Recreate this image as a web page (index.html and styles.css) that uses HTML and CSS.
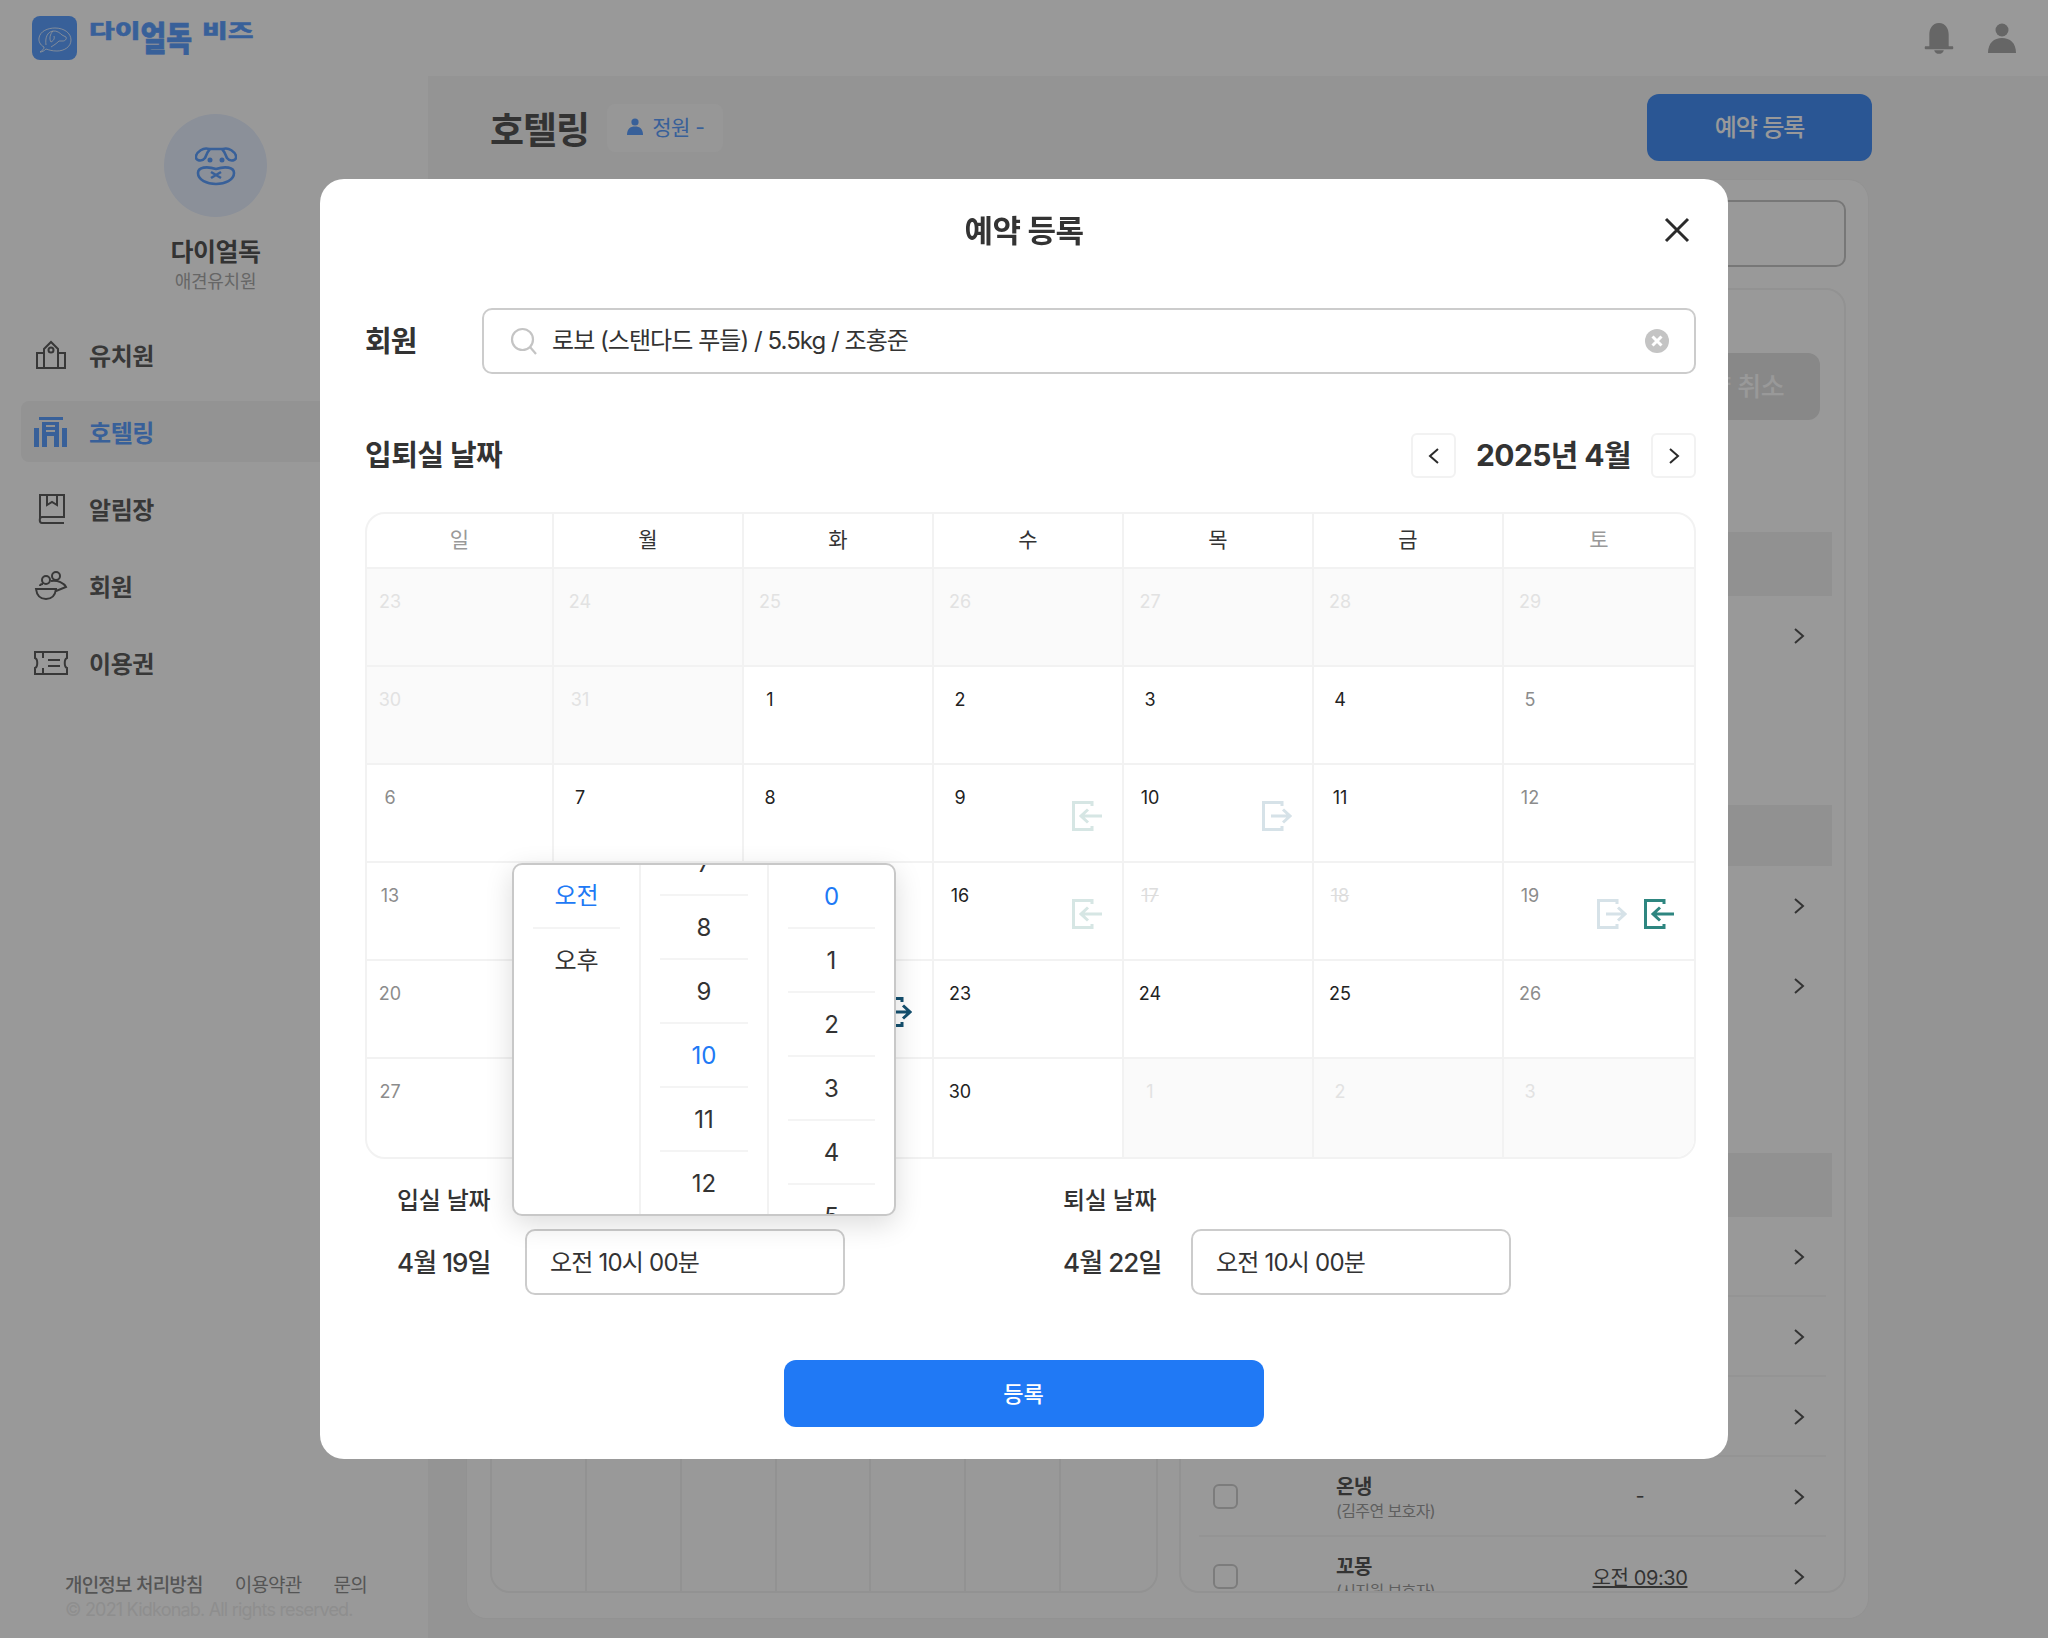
FILE: index.html
```html
<!DOCTYPE html>
<html lang="ko">
<head>
  <meta charset="UTF-8" />
  <title>다이얼독 비즈 - 호텔링</title>
  <meta name="viewport" content="width=device-width, initial-scale=1.0" />
  <link rel="stylesheet" href="styles.css">
</head>
<body>

<svg class="defs" aria-hidden="true">
  <symbol id="ic-in" viewBox="0 0 30 30">
    <path d="M20 5V1.5H1.5V28.5H20V25" fill="none" stroke="currentColor" stroke-width="3"/>
    <path d="M30 15H10M16 8.5L9 15L16 21.5" fill="none" stroke="currentColor" stroke-width="3"/>
  </symbol>
  <symbol id="ic-out" viewBox="0 0 30 30">
    <path d="M20 5V1.5H1.5V28.5H20V25" fill="none" stroke="currentColor" stroke-width="3"/>
    <path d="M9 15H28M21 8.5L28 15L21 21.5" fill="none" stroke="currentColor" stroke-width="3"/>
  </symbol>
  <symbol id="ic-chev" viewBox="0 0 12 18">
    <path d="M2 2L10 9L2 16" fill="none" stroke="currentColor" stroke-width="2"/>
  </symbol>
</svg>

<header class="topbar">
  <div class="brand">
    <svg class="brand-mark" viewBox="0 0 45 44">
      <rect width="45" height="44" rx="8" fill="#3c8cff"/>
      <g fill="none" stroke="#fff" stroke-width="1" stroke-opacity="0.75">
        <path d="M8 36C11 34 12 33 12 31C8 29 6.5 25 7 22C8 15 16 12 23 12C32 12 39 17 39 24C39 31 32 35 25 35C20 35 17 34 14 33C12 35 10 36 8 36Z"/>
        <path d="M14 29C13 22 15 16 21 15C25 14.5 28 17 30 19L34 21C35 23 33 25 31 25L27 25C24 28 22 29 19 31"/>
        <path d="M21 15C18 18 17 23 19 26C21 25 23 23 22 20"/>
      </g>
    </svg>
    <div class="brand-name">
      <span class="logo-short">다이</span><span class="logo-tall">얼독</span><span class="logo-short logo-gap">비즈</span>
    </div>
  </div>
  <div class="topbar-icons">
    <svg class="bell" viewBox="0 0 30 32"><path d="M15 0C22 0 25 6 25 12V24H29C30 24 30 27 29 27H1C0 27 0 24 1 24H5V12C5 6 8 0 15 0ZM10 28H20C19 33 11 33 10 28Z"/></svg>
    <svg class="person" viewBox="0 0 28 30"><circle cx="14" cy="7" r="6.5"/><path d="M0 30C0 20 6 15 14 15C22 15 28 20 28 30Z"/></svg>
  </div>
</header>

<div class="layout">
  <aside class="sidebar">
    <div class="profile">
      <div class="avatar">
        <svg viewBox="0 0 42 40" fill="none" stroke="#3c8cff" stroke-width="2.6">
          <path d="M14 3C8 1 2 6 1 10C0 15 7 16 10 12C11 10 12 6 15 3H27C30 6 31 10 32 12C35 16 42 15 41 10C40 6 34 1 28 3"/>
          <circle cx="15" cy="14" r="1.2"/><circle cx="27" cy="14" r="1.2"/>
          <path d="M3 27C3 21 12 20 21 23C30 20 39 21 39 27C39 34 30 38 21 38C12 38 3 34 3 27Z"/>
          <path d="M16 26L26 32M26 26L16 32"/>
        </svg>
      </div>
      <div class="profile-name">다이얼독</div>
      <div class="profile-sub">애견유치원</div>
    </div>

    <nav class="nav">
      <a class="nav-item">
        <svg class="nav-icon" viewBox="0 0 34 30" fill="none" stroke="currentColor" stroke-width="2">
          <path d="M10 28V9L17 2L24 9V28M10 13H3V28H31V13H24"/><circle cx="17" cy="10" r="2.5"/>
        </svg>
        유치원
      </a>
      <a class="nav-item active">
        <svg class="nav-icon" viewBox="0 0 34 30" fill="currentColor">
          <path d="M5 0H29V3H5ZM0 11H5V30H0ZM28 11H33V30H28ZM8 5H25V30H20V19H13V30H8ZM12 8V10H21V8ZM12 13V15H21V13Z" fill-rule="evenodd"/>
        </svg>
        호텔링
      </a>
      <a class="nav-item">
        <svg class="nav-icon" viewBox="0 0 34 30" fill="none" stroke="currentColor" stroke-width="2">
          <path d="M6 25V1H30V23H8C5 23 5 29 8 29H30"/><path d="M13 1V11L18 8L23 11V1"/>
        </svg>
        알림장
      </a>
      <a class="nav-item">
        <svg class="nav-icon" viewBox="0 0 34 30" fill="none" stroke="currentColor" stroke-width="2">
          <circle cx="12" cy="9" r="4"/><circle cx="22" cy="5" r="4"/>
          <path d="M2 18H22C21 26 17 28 12 28C7 28 3 26 2 18ZM17 10C24 9 30 12 32 16L22 20M6 15C6 13 8 13 9 13"/>
        </svg>
        회원
      </a>
      <a class="nav-item">
        <svg class="nav-icon" viewBox="0 0 34 30" fill="none" stroke="currentColor" stroke-width="2">
          <path d="M1 4H33V10C30 11 30 19 33 20V26H1V20C4 19 4 11 1 10ZM9 4V10M9 20V26M14 12H26M14 18H26"/>
        </svg>
        이용권
      </a>
    </nav>

    <footer class="side-foot">
      <div class="foot-links">
        <a class="foot-strong">개인정보 처리방침</a>
        <a>이용약관</a>
        <a>문의</a>
      </div>
      <div class="foot-copy">© 2021 Kidkonab. All rights reserved.</div>
    </footer>
  </aside>

  <main class="main">
    <div class="page-head">
      <h1 class="page-title">호텔링</h1>
      <div class="chip">
        <svg viewBox="0 0 18 17"><circle cx="9" cy="4" r="3.6"/><path d="M1 17C1 11 4 8.5 9 8.5C14 8.5 17 11 17 17Z"/></svg>
        정원 -
      </div>
      <button class="primary-btn">예약 등록</button>
    </div>

    <section class="board">
      <div class="board-search"></div>
      <div class="board-cols">
        <div class="week">
          <div></div><div></div><div></div><div></div><div></div><div></div><div></div>
        </div>
        <div class="list-panel">
          <button class="cancel-btn">예약 취소</button>

          <div class="list-bar first"></div>
          <div class="list-row plain"><svg class="row-chev"><use href="#ic-chev"/></svg></div>

          <div class="list-bar second"></div>
          <div class="list-row plain"><svg class="row-chev"><use href="#ic-chev"/></svg></div>
          <div class="list-row plain"><svg class="row-chev"><use href="#ic-chev"/></svg></div>

          <div class="list-bar third"></div>
          <div class="list-row"><svg class="row-chev"><use href="#ic-chev"/></svg></div>
          <div class="list-row"><svg class="row-chev"><use href="#ic-chev"/></svg></div>
          <div class="list-row"><svg class="row-chev"><use href="#ic-chev"/></svg></div>
          <div class="list-row">
            <span class="check"></span>
            <div class="pet"><strong>온냉</strong><span>(김주연 보호자)</span></div>
            <div class="time">-</div>
            <svg class="row-chev"><use href="#ic-chev"/></svg>
          </div>
          <div class="list-row">
            <span class="check"></span>
            <div class="pet"><strong>꼬몽</strong><span>(시지원 보호자)</span></div>
            <div class="time"><u>오전 09:30</u></div>
            <svg class="row-chev"><use href="#ic-chev"/></svg>
          </div>
        </div>
      </div>
    </section>
  </main>
</div>

<div class="overlay">
  <div class="modal">
    <div class="modal-head">
      <h2>예약 등록</h2>
      <svg class="modal-close" viewBox="0 0 26 26"><path d="M2 2L24 24M24 2L2 24" fill="none" stroke="#2b2b2b" stroke-width="3"/></svg>
    </div>

    <div class="member-row">
      <label>회원</label>
      <div class="search-box">
        <svg class="search-icon" viewBox="0 0 28 28" fill="none" stroke="#c4c4c4" stroke-width="2.2">
          <circle cx="12.5" cy="12.5" r="10.5"/><path d="M20 20L26 27"/>
        </svg>
        <span class="search-text">로보 (스탠다드 푸들) / 5.5kg / 조홍준</span>
        <svg class="search-clear" viewBox="0 0 24 24"><circle cx="12" cy="12" r="12" fill="#c4c4c4"/><path d="M7.5 7.5L16.5 16.5M16.5 7.5L7.5 16.5" stroke="#fff" stroke-width="3"/></svg>
      </div>
    </div>

    <div class="date-head">
      <h3>입퇴실 날짜</h3>
      <div class="month-nav">
        <button class="month-btn"><svg viewBox="0 0 12 18"><path d="M10 2L2 9L10 16" fill="none" stroke="#2b2b2b" stroke-width="2"/></svg></button>
        <span class="month-label">2025년 4월</span>
        <button class="month-btn"><svg viewBox="0 0 12 18"><path d="M2 2L10 9L2 16" fill="none" stroke="#2b2b2b" stroke-width="2"/></svg></button>
      </div>
    </div>

    <div class="calendar-wrap">
      <div class="calendar">
        <div class="dow muted">일</div><div class="dow">월</div><div class="dow">화</div><div class="dow">수</div><div class="dow">목</div><div class="dow">금</div><div class="dow muted">토</div>

        <div class="cell off"><span class="num">23</span></div>
        <div class="cell off"><span class="num">24</span></div>
        <div class="cell off"><span class="num">25</span></div>
        <div class="cell off"><span class="num">26</span></div>
        <div class="cell off"><span class="num">27</span></div>
        <div class="cell off"><span class="num">28</span></div>
        <div class="cell off"><span class="num">29</span></div>

        <div class="cell off"><span class="num">30</span></div>
        <div class="cell off"><span class="num">31</span></div>
        <div class="cell"><span class="num">1</span></div>
        <div class="cell"><span class="num">2</span></div>
        <div class="cell"><span class="num">3</span></div>
        <div class="cell"><span class="num">4</span></div>
        <div class="cell weekend"><span class="num">5</span></div>

        <div class="cell weekend"><span class="num">6</span></div>
        <div class="cell"><span class="num">7</span></div>
        <div class="cell"><span class="num">8</span></div>
        <div class="cell"><span class="num">9</span><div class="marks"><svg class="mark in-faint"><use href="#ic-in"/></svg></div></div>
        <div class="cell"><span class="num">10</span><div class="marks"><svg class="mark out-faint"><use href="#ic-out"/></svg></div></div>
        <div class="cell"><span class="num">11</span></div>
        <div class="cell weekend"><span class="num">12</span></div>

        <div class="cell weekend"><span class="num">13</span></div>
        <div class="cell"><span class="num">14</span></div>
        <div class="cell"><span class="num">15</span></div>
        <div class="cell"><span class="num">16</span><div class="marks"><svg class="mark in-faint"><use href="#ic-in"/></svg></div></div>
        <div class="cell closed"><span class="num">17</span></div>
        <div class="cell closed"><span class="num">18</span></div>
        <div class="cell weekend"><span class="num">19</span><div class="marks"><svg class="mark out-faint"><use href="#ic-out"/></svg><svg class="mark in-on"><use href="#ic-in"/></svg></div></div>

        <div class="cell weekend"><span class="num">20</span></div>
        <div class="cell"><span class="num">21</span></div>
        <div class="cell"><span class="num">22</span><div class="marks"><svg class="mark out-on"><use href="#ic-out"/></svg></div></div>
        <div class="cell"><span class="num">23</span></div>
        <div class="cell"><span class="num">24</span></div>
        <div class="cell"><span class="num">25</span></div>
        <div class="cell weekend"><span class="num">26</span></div>

        <div class="cell weekend"><span class="num">27</span></div>
        <div class="cell"><span class="num">28</span></div>
        <div class="cell"><span class="num">29</span></div>
        <div class="cell"><span class="num">30</span></div>
        <div class="cell off"><span class="num">1</span></div>
        <div class="cell off"><span class="num">2</span></div>
        <div class="cell off"><span class="num">3</span></div>
      </div>

      <div class="time-popup">
        <div class="time-col ampm">
          <div class="time-opt on">오전</div>
          <div class="time-opt">오후</div>
        </div>
        <div class="time-col hours">
          <div class="time-opt">7</div>
          <div class="time-opt">8</div>
          <div class="time-opt">9</div>
          <div class="time-opt on">10</div>
          <div class="time-opt">11</div>
          <div class="time-opt">12</div>
        </div>
        <div class="time-col">
          <div class="time-opt on">0</div>
          <div class="time-opt">1</div>
          <div class="time-opt">2</div>
          <div class="time-opt">3</div>
          <div class="time-opt">4</div>
          <div class="time-opt">5</div>
        </div>
      </div>
    </div>

    <div class="stay">
      <div class="stay-group">
        <div class="stay-label">입실 날짜</div>
        <div class="stay-line">
          <span class="stay-date">4월 19일</span>
          <div class="stay-input">오전 10시 00분</div>
        </div>
      </div>
      <div class="stay-group">
        <div class="stay-label">퇴실 날짜</div>
        <div class="stay-line">
          <span class="stay-date">4월 22일</span>
          <div class="stay-input">오전 10시 00분</div>
        </div>
      </div>
    </div>

    <button class="submit-btn">등록</button>
  </div>
</div>

</body>
</html>
```

FILE: styles.css
```css
* {
  box-sizing: border-box;
}

body {
  font-family: Inter, "Noto Sans CJK KR", sans-serif;
  background-color: #f4f4f4;
  color: #333;
  margin: 0;
  width: 2048px;
  height: 1638px;
  overflow: hidden;
}

button {
  font-family: inherit;
  border: none;
}

.defs {
  position: absolute;
  width: 0;
  height: 0;
}

/* top bar */
.topbar {
  height: 76px;
  background-color: #fff;
  padding: 16px 32px 0;
  display: flex;
  justify-content: space-between;
}

.brand {
  display: flex;
  gap: 12px;
  height: 44px;
}

.brand-mark {
  width: 45px;
  height: 44px;
}

.brand-name {
  display: flex;
  align-items: flex-start;
  height: 44px;
  color: #3c8cff;
  font-family: "Noto Sans CJK KR", sans-serif;
  font-size: 28px;
  font-weight: 900;
  line-height: 28px;
  -webkit-text-stroke: 0.6px #3c8cff;
}

.logo-short {
  transform: scaleY(0.7);
  transform-origin: 0 0;
  margin-top: 4px;
}

.logo-tall {
  transform: scaleY(1.2);
  transform-origin: 0 0;
  margin-top: 4px;
}

.logo-gap {
  margin-left: 10px;
}

.topbar-icons {
  display: flex;
  gap: 34px;
  padding: 7px 0 0 0;
}

.bell {
  width: 30px;
  height: 31px;
  fill: #989898;
}

.person {
  width: 28px;
  height: 30px;
  fill: #989898;
}

/* sidebar */
.layout {
  display: flex;
  height: 1562px;
}

.sidebar {
  width: 428px;
  background-color: #fff;
  display: flex;
  flex-direction: column;
}

.profile {
  text-align: center;
  padding: 38px 0 0 3px;
}

.avatar {
  width: 103px;
  height: 103px;
  border-radius: 50%;
  background-color: #e2ecff;
  margin: 0 auto 19px;
  display: flex;
  align-items: center;
  justify-content: center;
}

.avatar svg {
  width: 42px;
  height: 40px;
}

.profile-name {
  font-size: 25px;
  font-weight: 700;
  line-height: 33px;
  letter-spacing: -0.5px;
}

.profile-sub {
  font-size: 18px;
  line-height: 25px;
  color: #999;
  letter-spacing: -0.3px;
}

.nav {
  margin: 30px 21px 0;
  display: flex;
  flex-direction: column;
  gap: 16px;
}

.nav-item {
  height: 61px;
  display: flex;
  align-items: center;
  gap: 21px;
  padding-left: 13px;
  border-radius: 8px;
  font-size: 24px;
  font-weight: 700;
  letter-spacing: -0.4px;
  color: #3c3c3c;
}

.nav-item.active {
  background-color: #f2f2f2;
  color: #3c8cff;
}

.nav-icon {
  width: 34px;
  height: 30px;
}

.side-foot {
  margin-top: auto;
  padding: 0 0 18px 65px;
  font-size: 19px;
  color: #777;
  letter-spacing: -0.8px;
}

.foot-links {
  display: flex;
  gap: 32px;
  line-height: 28px;
}

.foot-strong {
  font-weight: 500;
}

.foot-copy {
  line-height: 20px;
  color: #e8e8e8;
  font-size: 18px;
}

/* page behind the modal */
.main {
  flex: 1;
  padding: 18px 176px 0 39px;
}

.page-head {
  display: flex;
  align-items: center;
  height: 67px;
  margin-left: 23px;
}

.page-title {
  font-size: 37px;
  font-weight: 700;
  letter-spacing: -1px;
  margin: 0 18px 0 0;
}

.chip {
  height: 48px;
  width: 116px;
  background-color: #fafafa;
  border-radius: 8px;
  display: flex;
  align-items: center;
  gap: 8px;
  padding: 0 0 3px 19px;
  font-size: 21px;
  letter-spacing: -0.5px;
  color: #3c8cff;
}

.chip svg {
  width: 18px;
  height: 17px;
  fill: #3c8cff;
}

.primary-btn {
  margin-left: auto;
  width: 225px;
  height: 67px;
  padding-bottom: 5px;
  border-radius: 12px;
  background-color: #2079f5;
  color: #fff;
  font-size: 24px;
  font-weight: 500;
  letter-spacing: -1px;
}

.board {
  width: 1401px;
  height: 1438px;
  margin-top: 19px;
  padding: 20px 22px 0 23px;
  background-color: #fff;
  border-radius: 20px;
  box-shadow: 0 0 0 1px #f0f0f0;
}

.board-search {
  height: 67px;
  border: 2px solid #bbb;
  border-radius: 10px;
}

.board-cols {
  display: flex;
  gap: 21px;
  margin-top: 21px;
}

.week {
  width: 668px;
  height: 1305px;
  border: 2px solid #f0f0f0;
  border-radius: 20px;
  display: grid;
  grid-template-columns: repeat(7, 1fr);
  overflow: hidden;
}

.week div {
  border-right: 2px solid #f0f0f0;
}

.week div:last-child {
  border-right: none;
}

.list-panel {
  width: 667px;
  height: 1305px;
  border: 2px solid #f0f0f0;
  border-radius: 20px;
  padding-top: 63px;
  overflow: hidden;
}

.cancel-btn {
  display: block;
  margin-left: auto;
  margin-right: 24px;
  width: 176px;
  height: 67px;
  padding: 0 0 5px 4px;
  border-radius: 12px;
  background-color: #dcdcdc;
  color: #fff;
  font-size: 26px;
  font-weight: 500;
  letter-spacing: -0.5px;
}

.list-bar {
  height: 64px;
  margin: 0 12px;
  background-color: #eee;
}

.list-bar.first {
  margin-top: 112px;
}

.list-bar.second {
  height: 61px;
  margin-top: 129px;
}

.list-bar.third {
  margin-top: 127px;
}

.list-row {
  height: 80px;
  margin: 0 18px;
  display: flex;
  align-items: center;
  padding-left: 14px;
  border-bottom: 2px solid #f4f4f4;
  position: relative;
}

.list-row.plain {
  border-bottom: none;
}

.row-chev {
  width: 12px;
  height: 18px;
  color: #333;
  position: absolute;
  right: 21px;
  top: 31px;
}

.check {
  width: 25px;
  height: 25px;
  border: 2px solid #c4c4c4;
  border-radius: 6px;
}

.pet {
  margin: 4px 0 0 98px;
  width: 204px;
  display: flex;
  flex-direction: column;
}

.pet strong {
  font-size: 20px;
  line-height: 25px;
  letter-spacing: -0.5px;
}

.pet span {
  font-size: 16px;
  line-height: 22px;
  color: #888;
  letter-spacing: -0.6px;
}

.time {
  width: 200px;
  text-align: center;
  font-size: 20px;
  letter-spacing: -0.4px;
}

/* modal */
.overlay {
  position: fixed;
  inset: 0;
  background-color: rgba(51, 51, 51, 0.5);
  display: flex;
  align-items: center;
  justify-content: center;
}

.modal {
  width: 1408px;
  height: 1280px;
  background-color: #fff;
  border-radius: 24px;
  padding: 0 32px 0 45px;
}

.modal-head {
  height: 102px;
  display: flex;
  align-items: center;
  justify-content: center;
  position: relative;
}

.modal-head h2 {
  margin: 0 0 4px -13px;
  font-size: 31px;
  font-weight: 700;
  letter-spacing: -0.5px;
  color: #333;
}

.modal-close {
  position: absolute;
  right: 6px;
  top: 38px;
  width: 26px;
  height: 26px;
}

.member-row {
  display: flex;
  align-items: center;
  margin-top: 27px;
}

.member-row label {
  width: 117px;
  font-size: 29px;
  font-weight: 700;
  letter-spacing: -1px;
  margin-bottom: 5px;
}

.search-box {
  flex: 1;
  height: 66px;
  border: 2px solid #ccc;
  border-radius: 10px;
  display: flex;
  align-items: center;
  padding: 0 25px 0 26px;
}

.search-icon {
  width: 28px;
  height: 28px;
}

.search-text {
  margin: 0 0 5px 14px;
  font-size: 24px;
  letter-spacing: -0.95px;
  color: #333;
}

.search-clear {
  margin-left: auto;
  width: 24px;
  height: 24px;
}

.date-head {
  display: flex;
  align-items: center;
  justify-content: space-between;
  margin-top: 59px;
  height: 45px;
}

.date-head h3 {
  margin: 0 0 5px;
  font-size: 29px;
  font-weight: 700;
  letter-spacing: -0.5px;
}

.month-nav {
  display: flex;
  align-items: center;
}

.month-btn {
  width: 45px;
  height: 45px;
  background-color: #fff;
  border: 2px solid #f2f2f2;
  border-radius: 6px;
  padding: 0;
  display: flex;
  align-items: center;
  justify-content: center;
}

.month-btn svg {
  width: 12px;
  height: 18px;
}

.month-label {
  width: 195px;
  margin-bottom: 5px;
  text-align: center;
  font-size: 30px;
  font-weight: 700;
  letter-spacing: -0.6px;
}

.calendar-wrap {
  position: relative;
  margin-top: 34px;
}

.calendar {
  display: grid;
  grid-template-columns: 187px repeat(6, 1fr);
  grid-template-rows: 55px repeat(6, 1fr);
  height: 647px;
  border: 2px solid #f2f2f2;
  border-radius: 20px;
  overflow: hidden;
}

.dow {
  display: flex;
  align-items: center;
  justify-content: center;
  padding-bottom: 5px;
  font-size: 21px;
  color: #333;
  border-right: 2px solid #f2f2f2;
  border-bottom: 2px solid #f2f2f2;
}

.dow.muted {
  color: #999;
}

.cell {
  position: relative;
  border-right: 2px solid #f2f2f2;
  border-bottom: 2px solid #f2f2f2;
  color: #222;
}

.dow:nth-child(7n),
.cell:nth-child(7n) {
  border-right: none;
}

.cell:nth-last-child(-n+7) {
  border-bottom: none;
}

.num {
  position: absolute;
  left: 6px;
  top: 20px;
  width: 40px;
  text-align: center;
  font-size: 18px;
  line-height: 26px;
}

.cell:nth-child(7n+1) .num {
  left: 3px;
}

.cell.off {
  background-color: #fafafa;
  color: #e2e2e2;
}

.cell.weekend {
  color: #8c8c8c;
}

.cell.closed {
  color: #ddd;
}

.cell.closed .num {
  text-decoration: line-through;
}

.marks {
  position: absolute;
  right: 20px;
  top: 36px;
  display: flex;
  gap: 17px;
}

.mark {
  width: 30px;
  height: 30px;
}

.in-faint {
  color: #d6e6e4;
}

.out-faint {
  color: #d6e2e8;
}

.in-on {
  color: #2e8680;
}

.out-on {
  color: #14506f;
}

/* hour picker lying over the calendar */
.time-popup {
  position: absolute;
  left: 147px;
  top: 351px;
  width: 384px;
  height: 353px;
  background-color: #fff;
  border: 2px solid #c8c8c8;
  border-radius: 10px;
  box-shadow: 0 8px 28px rgba(0, 0, 0, 0.14);
  display: grid;
  grid-template-columns: 127px 128px 1fr;
  overflow: hidden;
}

.time-col {
  border-right: 2px solid #f2f2f2;
  padding: 0 19px;
}

.time-col:last-child {
  border-right: none;
}

.time-col.hours {
  margin-top: -33px;
}

.time-opt {
  height: 64px;
  display: flex;
  align-items: center;
  justify-content: center;
  font-size: 24px;
  color: #333;
  border-bottom: 2px solid #f4f4f4;
}

.time-opt.on {
  color: #2079f5;
}

.time-col.ampm .time-opt {
  padding-bottom: 5px;
}

.time-col.ampm .time-opt:last-child {
  border-bottom: none;
}

.stay {
  display: grid;
  grid-template-columns: 666px 1fr;
  padding-left: 32px;
  margin-top: 27px;
}

.stay-label {
  font-size: 24px;
  font-weight: 500;
  line-height: 30px;
  letter-spacing: -0.3px;
  margin-bottom: 13px;
}

.stay-line {
  display: flex;
  align-items: center;
}

.stay-date {
  width: 128px;
  margin-bottom: 3px;
  font-size: 26px;
  font-weight: 500;
  letter-spacing: -0.9px;
}

.stay-input {
  width: 320px;
  height: 66px;
  border: 2px solid #ccc;
  border-radius: 10px;
  padding: 0 0 3px 23px;
  display: flex;
  align-items: center;
  font-size: 24px;
  letter-spacing: -0.8px;
}

.submit-btn {
  display: block;
  width: 480px;
  height: 67px;
  margin: 65px auto 0;
  padding-bottom: 4px;
  transform: translateX(-7px);
  background-color: #2079f5;
  border-radius: 12px;
  color: #fff;
  font-size: 22px;
  font-weight: 500;
}
```
